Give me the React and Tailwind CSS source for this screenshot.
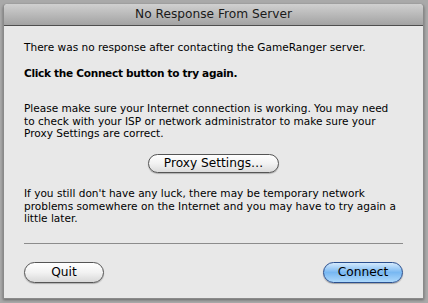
export default function App() {
  const font = { fontFamily: '"DejaVu Sans", "Liberation Sans", sans-serif' };
  return (
    <div
      className="w-[428px] h-[303px] overflow-hidden bg-[#a9a9a9] pt-[4px] pl-[3px]"
      style={font}
    >
      {/* Dialog window */}
      <div className="w-[421px] h-[295px] flex flex-col bg-[#e8e8e8] border-x border-b border-[#8a8a8a] rounded-t-[4px] shadow-[0_1px_3px_rgba(0,0,0,0.4)]">
        {/* Title bar */}
        <div className="h-[22px] shrink-0 flex items-center justify-center rounded-t-[4px] bg-gradient-to-b from-[#d0d0d0] to-[#a3a3a3] border-b border-[#4e4e4e] text-[12.2px] text-[#1a1a1a]">
          No Response From Server
        </div>

        {/* Content */}
        <div className="flex flex-col px-[20px] pt-[15px] text-[10.55px] leading-[12.5px] text-black">
          <p className="whitespace-nowrap">
            There was no response after contacting the GameRanger server.
          </p>
          <p className="mt-[13.5px] font-bold tracking-[-0.3px] whitespace-nowrap">
            Click the Connect button to try again.
          </p>
          <p className="mt-[22.5px] whitespace-nowrap">
            Please make sure your Internet connection is working. You may need
            <br />
            to check with your ISP or network administrator to make sure your
            <br />
            Proxy Settings are correct.
          </p>

          <div className="mt-[14px] flex justify-center">
            <button className="w-[131px] h-[19px] rounded-full border border-[#555] bg-gradient-to-b from-white via-[#f2f2f2] to-[#dcdcdc] text-[12.2px] leading-none text-black shadow-[0_1px_1px_rgba(0,0,0,0.25)]">
              Proxy Settings…
            </button>
          </div>

          <p className="mt-[14.5px] whitespace-nowrap">
            If you still don't have any luck, there may be temporary network
            <br />
            problems somewhere on the Internet and you may have to try again a
            <br />
            little later.
          </p>

          <div className="mt-[18px] h-px bg-[#8c8c8c]" />

          <div className="mt-[18px] flex justify-between">
            <button className="w-[80px] h-[21px] rounded-full border border-[#555] bg-gradient-to-b from-white via-[#f2f2f2] to-[#d8d8d8] text-[12.2px] leading-none text-black shadow-[0_1px_1px_rgba(0,0,0,0.25)]">
              Quit
            </button>
            <button className="w-[80px] h-[21px] rounded-full border border-[#2a4f8f] bg-gradient-to-b from-[#d4e9fc] via-[#78b8f2] to-[#acd8fb] text-[12.2px] leading-none text-black shadow-[0_1px_1px_rgba(0,0,0,0.3)]">
              Connect
            </button>
          </div>
        </div>
      </div>
    </div>
  );
}
